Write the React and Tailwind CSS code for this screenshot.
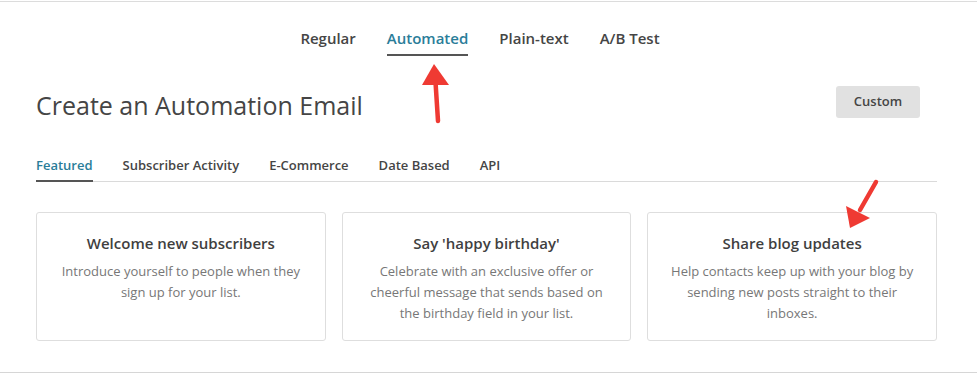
import React from 'react';

const topTabs = ['Regular', 'Automated', 'Plain-text', 'A/B Test'];
const subTabs = ['Featured', 'Subscriber Activity', 'E-Commerce', 'Date Based', 'API'];

const cards = [
    {
        title: 'Welcome new subscribers',
        text: 'Introduce yourself to people when they sign up for your list.',
    },
    {
        title: "Say 'happy birthday'",
        text: 'Celebrate with an exclusive offer or cheerful message that sends based on the birthday field in your list.',
    },
    {
        title: 'Share blog updates',
        text: 'Help contacts keep up with your blog by sending new posts straight to their inboxes.',
    },
];

const Arrows = () => (
    <svg className="absolute inset-0 pointer-events-none" width="977" height="375" viewBox="0 0 977 375">
        {/* arrow under "Automated" */}
        <line x1="435.5" y1="82" x2="438" y2="121" stroke="#ef3a33" strokeWidth="4.5" strokeLinecap="round" />
        <polygon points="434,64 449,85 422,85" fill="#ef3a33" />
        {/* arrow pointing at the blog card */}
        <line x1="876" y1="182" x2="860" y2="210" stroke="#ef3a33" strokeWidth="4.5" strokeLinecap="round" />
        <polygon points="850,228 846,206 870,218" fill="#ef3a33" />
    </svg>
);

const App = () => {
    return (
        <div className="relative w-[977px] h-[375px] bg-white font-['Open_Sans',sans-serif] text-[#444] overflow-hidden">
            <div className="h-px mt-px bg-[#dcdcdc]" />

            <nav className="flex justify-center gap-[31px] pr-[17px] mt-[26px]">
                {topTabs.map((t) => (
                    <span
                        key={t}
                        className={
                            'text-[15px] leading-5 font-semibold pb-[6px] border-b-2 ' +
                            (t === 'Automated' ? 'text-[#2a7d99] border-[#555]' : 'text-[#454545] border-transparent')
                        }
                    >
                        {t}
                    </span>
                ))}
            </nav>

            <div className="pl-9 pr-10">
                <div className="flex justify-between items-start mt-[30px]">
                    <h1 className="text-[25px] leading-8 mt-[3px] text-[#454545]">Create an Automation Email</h1>
                    <button className="w-[84px] h-8 mr-[17px] rounded-[3px] bg-[#e1e1e1] text-[13px] font-semibold text-[#454545]">
                        Custom
                    </button>
                </div>

                <div className="flex gap-[30px] mt-[35px] border-b border-[#dadada]">
                    {subTabs.map((t) => (
                        <span
                            key={t}
                            className={
                                'text-[13px] leading-[18px] font-semibold pb-[6px] border-b-2 -mb-px ' +
                                (t === 'Featured' ? 'text-[#2a7d99] border-[#555]' : 'text-[#454545] border-transparent')
                            }
                        >
                            {t}
                        </span>
                    ))}
                </div>

                <div className="grid grid-cols-3 gap-4 mt-[30px]">
                    {cards.map((c) => (
                        <div key={c.title} className="border border-[#dedede] rounded-[3px] px-5 pt-5 pb-4 text-center">
                            <h3 className="text-[15px] leading-5 font-semibold text-[#3f3f3f]">{c.title}</h3>
                            <p className="text-[13px] leading-[21px] text-[#777] mt-2">{c.text}</p>
                        </div>
                    ))}
                </div>
            </div>

            <div className="h-px mt-[31px] bg-[#d6d6d6]" />

            <Arrows />
        </div>
    );
};

export default App;
